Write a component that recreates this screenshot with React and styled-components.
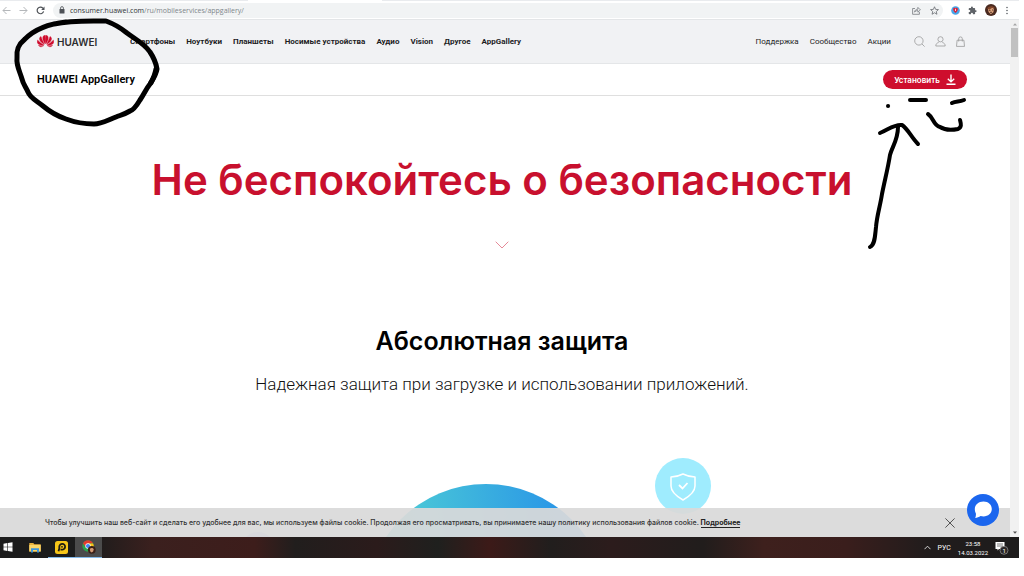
import React from 'react';
import styled, { createGlobalStyle } from 'styled-components';

const mainLinks = [
  'Смартфоны',
  'Ноутбуки',
  'Планшеты',
  'Носимые устройства',
  'Аудио',
  'Vision',
  'Другое',
  'AppGallery',
];

const sideLinks = ['Поддержка', 'Сообщество', 'Акции'];

const App = () => {
  return (
    <Desktop>
      <GlobalStyle />
      <TabStrip>
        <ActiveTab />
      </TabStrip>
      <BrowserBar />
      <Viewport>
        <Page>
          <SiteHeader />
          <SubHeader>
            <ProductName>HUAWEI AppGallery</ProductName>
            <InstallButton type="button">
              Установить
              <DownloadIcon />
            </InstallButton>
          </SubHeader>
          <Hero>
            <HeroTitle>Не беспокойтесь о безопасности</HeroTitle>
            <svg width="14" height="8" viewBox="0 0 14 8" fill="none" stroke="#e58a98">
              <path d="M.7.7 7 7l6.300-6.300" />
            </svg>
            <SectionTitle>Абсолютная защита</SectionTitle>
            <SectionText>Надежная защита при загрузке и использовании приложений.</SectionText>
            <Illustration />
          </Hero>
          <CookieBar>
            <CookieText>
              Чтобы улучшить наш веб-сайт и сделать его удобнее для вас, мы используем файлы cookie. Продолжая его
              просматривать, вы принимаете нашу политику использования файлов cookie.{' '}
              <MoreLink href="#cookies">Подробнее</MoreLink>
            </CookieText>
            <IconButton type="button" aria-label="Закрыть">
              <svg width="10" height="10" viewBox="0 0 10 10" stroke="#444" strokeWidth="0.9">
                <path d="M.4.4l9.200 9.200M9.600.4.4 9.600" />
              </svg>
            </IconButton>
          </CookieBar>
          <ChatButton type="button" aria-label="Чат">
            <svg width="20" height="20" viewBox="0 0 20 20" fill="#fff">
              <path d="M10.500 1.500c5 0 8.300 3.300 8.300 7.600 0 4.400-3.600 7.400-8.300 7.400-1 0-2-.1-2.900-.4-1.600 1.100-3.600 1.900-5.400 1.900.7-1.300.8-3 .7-4.500C2.300 12.300 1.800 10.800 1.800 9.100c0-4.300 3.700-7.600 8.700-7.600z" />
            </svg>
          </ChatButton>
        </Page>
        <ScrollBar>
          <svg width="8" height="8" viewBox="0 0 8 8" fill="#a3a3a3">
            <path d="M2 5.500 4 3.300l2 2.200z" />
          </svg>
          <Thumb />
          <svg width="8" height="8" viewBox="0 0 8 8" fill="#505050">
            <path d="M2 2.500 4 4.700l2-2.200z" />
          </svg>
        </ScrollBar>
      </Viewport>
      <Taskbar />
      <CircleMark width="164" height="120" viewBox="0 0 164 120">
        <path d="M54 15C72 11 90 12 106 12C114 15 121 19 127 24C135 30 145 35 150 43C154 49 156 54 157 60C156 66 153 70 150 75C146 80 144 85 140 91C137 96 134 101 130 102C125 105 121 106 116 108C108 111 101 115 94 115C84 115 74 113 66 110C57 107 49 102 43 97C37 92 30 89 28 83C26 78 23 75 22 70C20 63 16 56 17 49C16 40 19 35 25 30C34 21 47 15 66 13" />
        <path d="M156 60C155 66 153 70 151 74" />
      </CircleMark>
      <ArrowMark width="110" height="156" viewBox="0 0 110 156">
        <path d="M30 12h.1" />
        <path d="M52 6H68M94 9C98 7 101 8 106 6" />
        <path d="M70 20C76 24 75 31 82 33C88 37 95 36 100 35C104 33 103 30 102 26" />
        <path d="M12 153C17 151 17 142 18 133C19 121 22 113 24 100C27 85 30 74 32 61C34 53 40 46 40 33" />
        <path d="M22 39C30 36 36 30 44 31C50 35 53 43 60 50" />
      </ArrowMark>
    </Desktop>
  );
};

export default App;

const BrowserBar = () => (
  <Toolbar>
    <IconButton type="button" aria-label="Назад">
      <svg width="9" height="9" viewBox="0 0 9 9" fill="none" stroke="#b4b7ba">
        <path d="M8.500 4.500H1M4.500 1 1 4.500 4.500 8" />
      </svg>
    </IconButton>
    <IconButton type="button" aria-label="Вперёд">
      <svg width="9" height="9" viewBox="0 0 9 9" fill="none" stroke="#b4b7ba">
        <path d="M.5 4.500H8M4.500 1 8 4.500 4.500 8" />
      </svg>
    </IconButton>
    <IconButton type="button" aria-label="Обновить">
      <svg width="9" height="9" viewBox="0 0 9 9" fill="none" stroke="#4d5156" strokeWidth="1.2">
        <path d="M7.600 5.400A3.300 3.300 0 1 1 6.900 2.200L7.700 3" />
        <path d="M8.500.6v3.300H5.200z" fill="#4d5156" stroke="none" />
      </svg>
    </IconButton>
    <AddressBox>
      <svg width="6" height="8" viewBox="0 0 6 8">
        <rect x="0.500" y="3" width="5" height="4.500" rx="0.500" fill="#4d5156" />
        <path d="M1.600 3V2a1.400 1.400 0 0 1 2.800 0v1" fill="none" stroke="#4d5156" strokeWidth="0.800" />
      </svg>
      <Url>
        <b>consumer.huawei.com</b>/ru/mobileservices/appgallery/
      </Url>
      <svg width="9" height="9" viewBox="0 0 9 9" fill="none" stroke="#777b80" strokeWidth="0.800">
        <path d="M3 2.500H.6v5.800h6.800V6M2.500 6.200c.2-2 1.600-3 3.400-3V1.400l2.500 2.500-2.500 2.300V4.600C4.500 4.500 3.300 5 2.500 6.200z" />
      </svg>
      <svg width="9" height="9" viewBox="0 0 24 24" fill="none" stroke="#5f6368" strokeWidth="2">
        <path d="m12 2 3 7 7.500.6-5.700 5 1.700 7.400L12 18l-6.500 4 1.700-7.400-5.700-5L9 9z" />
      </svg>
    </AddressBox>
    <svg width="9" height="9" viewBox="0 0 9 9">
      <circle cx="4.500" cy="4.500" r="4.300" fill="#48a5e8" />
      <path d="M4.500 2c1.500-.6 2.600.2 2.300 1.500C6.600 5 5.500 6.300 4.500 7 3.500 6.300 2.400 5 2.200 3.500 1.900 2.200 3 1.400 4.500 2z" fill="#dd2238" />
      <path d="M4.500 2.800v2.200" stroke="#fff" strokeWidth="0.800" />
    </svg>
    <svg width="9" height="9" viewBox="0 0 24 24" fill="#5f6368">
      <path d="M20.500 11H19V7a2 2 0 0 0-2-2h-4V3.500a2.500 2.500 0 0 0-5 0V5H4a2 2 0 0 0-2 2v3.800h1.500a2.700 2.700 0 0 1 0 5.400H2V20a2 2 0 0 0 2 2h3.800v-1.500a2.700 2.700 0 0 1 5.400 0V22H17a2 2 0 0 0 2-2v-4h1.500a2.500 2.500 0 0 0 0-5z" />
    </svg>
    <svg width="12" height="12" viewBox="0 0 12 12">
      <circle cx="6" cy="6" r="6" fill="#4a2a20" />
      <path d="M3 5.200c1-2 4-2.500 6-.2l-.6 3.300-2.600 1.900L3.600 8z" fill="#dba17a" />
      <path d="M2 4.500C4 1.800 8 1.500 10 4.300L7 4 4.500 5.500z" fill="#80442a" />
      <path d="M4 6.300h1.500M7 6h1.300M5 8.300h2" stroke="#3b211b" strokeWidth="0.800" />
    </svg>
    <svg width="4" height="9" viewBox="0 0 4 9" fill="#5f6368">
      <circle cx="2" cy="1.500" r="0.800" />
      <circle cx="2" cy="4.500" r="0.800" />
      <circle cx="2" cy="7.500" r="0.800" />
    </svg>
  </Toolbar>
);

const SiteHeader = () => (
  <Header>
    <Logo href="#home">
      <svg width="17" height="13" viewBox="0 0 34 26" fill="#cf0a2c" stroke="#cf0a2c" strokeWidth="0.800">
        <path d="M16.300 17.500C13 13 10 6 12.500 2.300 13.700.7 15.800.3 16.300.3c.9 5 .9 12 0 17.200z" />
        <path d="M17.700 17.500C21 13 24 6 21.500 2.300 20.300.7 18.200.3 17.700.3c-.9 5-.9 12 0 17.200z" />
        <path d="M14.700 18.700C8.500 15.500 4.200 10.500 5 6.500c.3-1.700 1.700-3 3-3.500 1.500 5.200 4.400 11 6.700 15.700z" />
        <path d="M19.300 18.700c6.200-3.200 10.500-8.200 9.700-12.200-.3-1.700-1.700-3-3-3.500-1.500 5.200-4.400 11-6.700 15.700z" />
        <path d="M13.700 20C8 20.500 2.800 19.500 1 16c-1-2-.5-4.500.3-6 3.300 4 8 7.500 12.400 10z" />
        <path d="M20.300 20c5.700.5 10.900-.5 12.700-4 1-2 .5-4.500-.3-6-3.300 4-8 7.500-12.400 10z" />
        <path d="M13.400 21.200c-3 2.400-7 3.600-9.600.5-.5-.6-.8-1-.9-1.400 3.500 1 7 1.200 10.500.9z" />
        <path d="M20.600 21.200c3 2.400 7 3.600 9.600.5.5-.6.800-1 .9-1.400-3.500 1-7 1.200-10.500.9z" />
      </svg>
      HUAWEI
    </Logo>
    <Nav>
      {mainLinks.map((link) => (
        <NavLink key={link} href="#catalog" $bold>
          {link}
        </NavLink>
      ))}
    </Nav>
    <SideNav>
      {sideLinks.map((link) => (
        <NavLink key={link} href="#info">
          {link}
        </NavLink>
      ))}
    </SideNav>
    <HeaderIcons>
      <IconButton type="button" aria-label="Поиск">
        <svg width="11" height="11" viewBox="0 0 11 11" fill="none" stroke="#999" strokeWidth="0.800">
          <circle cx="4.900" cy="4.900" r="4.200" />
          <path d="m8 8 2.600 2.600" />
        </svg>
      </IconButton>
      <IconButton type="button" aria-label="Профиль">
        <svg width="11" height="11" viewBox="0 0 11 11" fill="none" stroke="#999" strokeWidth="0.800">
          <circle cx="5.500" cy="3.300" r="2.600" />
          <path d="M3.700 6.500C2 6.800.8 8 .8 10h9.400c0-2-1.200-3.200-2.900-3.500" />
        </svg>
      </IconButton>
      <IconButton type="button" aria-label="Корзина">
        <svg width="9" height="11" viewBox="0 0 9 11" fill="none" stroke="#999" strokeWidth="0.800">
          <path d="M1.100 4.200h6.800l.6 6.200h-8zM2.700 5.500V2.700a1.800 1.800 0 0 1 3.600 0v2.800" />
        </svg>
      </IconButton>
    </HeaderIcons>
  </Header>
);

const DownloadIcon = () => (
  <svg width="10" height="11" viewBox="0 0 10 11" fill="none" stroke="#fff" strokeWidth="1.400">
    <path d="M5 .5v7.300M1.800 4.800 5 7.900l3.200-3.100M.5 10.200h9" />
  </svg>
);

const Illustration = () => (
  <Drawing width="560" height="120" viewBox="0 0 560 120">
    <defs>
      <linearGradient id="globe" x1="0" y1="0.300" x2="1" y2="0.200">
        <stop offset="0.150" stopColor="#4ccbd6" />
        <stop offset="0.800" stopColor="#2b98e6" />
      </linearGradient>
    </defs>
    <circle cx="264" cy="155" r="121" fill="url(#globe)" />
    <circle cx="36" cy="99" r="17" fill="#c4c2f4" />
    <circle cx="461" cy="36" r="28" fill="#9fecfe" />
    <path
      d="M461 24c4 2 8 3 12 3v9c0 6-5 10-12 14-7-4-12-8-12-14v-9c4 0 8-1 12-3z"
      fill="none"
      stroke="#fff"
      strokeWidth="1.500"
      strokeLinejoin="round"
    />
    <path d="m457 35 3.500 3.500 5-5.500" fill="none" stroke="#fff" strokeWidth="1.800" />
  </Drawing>
);

const Taskbar = () => (
  <Bar>
    <Task type="button" aria-label="Пуск">
      <svg width="10" height="10" viewBox="0 0 10 10" fill="#fff">
        <path d="M.5 1.700 4.400 1v3.700H.5zM5 .9 9.500.2v4.500H5zM.5 5.300h3.900V9L.5 8.300zM5 5.300h4.500v4.500L5 9.100z" />
      </svg>
    </Task>
    <Task type="button" aria-label="Проводник">
      <svg width="12" height="11" viewBox="0 0 12 11">
        <path d="M.3 1h4l1 1.200h6.400V9.500H.3z" fill="#e9b23c" />
        <path d="M.3 3h11.400v6.500H.3z" fill="#fcd668" />
        <path d="M2 10.500V6.200h8v4.300H8V8H4v2.500z" fill="#3f97dc" />
      </svg>
    </Task>
    <Task type="button" aria-label="Плеер" $running>
      <svg width="13" height="13" viewBox="0 0 13 13">
        <rect width="13" height="13" rx="2.500" fill="#f7c619" />
        <path d="M3.500 10.300 4.300 7.500V5.600A2.900 2.900 0 1 1 7 8.600H5.500" fill="none" stroke="#201d12" strokeWidth="1.800" />
        <circle cx="7" cy="5.800" r="0.900" fill="#201d12" />
      </svg>
    </Task>
    <Task type="button" aria-label="Chrome" $running $active>
      <svg width="14" height="14" viewBox="0 0 14 14">
        <circle cx="6" cy="6" r="5.700" fill="#2ba24c" />
        <path d="M1 3.200A5.700 5.700 0 0 1 11 3.200L6 3.400 3.700 7.300z" fill="#e33b2e" />
        <path d="M6 3.400h5.100A5.700 5.700 0 0 1 6 11.700l2.300-4.300z" fill="#fbc116" />
        <circle cx="6" cy="6" r="2.700" fill="#fff" />
        <circle cx="6" cy="6" r="2.100" fill="#4285f4" />
        <circle cx="9.800" cy="9.800" r="3.900" fill="#3a2018" />
        <path d="M7.800 9c1-1.300 3.200-1.200 4 .3l-.7 2.200-1.400.9-1.400-1z" fill="#d39a75" />
      </svg>
    </Task>
    <Tray>
      <svg width="7" height="5" viewBox="0 0 7 5" fill="none" stroke="#e6e6e6" strokeWidth="0.900">
        <path d="m.5 4.200 3-3 3 3" />
      </svg>
      <span>РУС</span>
      <Clock>
        <span>23:58</span>
        <span>14.03.2022</span>
      </Clock>
      <svg width="14" height="14" viewBox="0 0 14 14">
        <path d="M.5 1h9v7H4L2.500 9.600V8h-2z" fill="#fff" />
        <path d="M2 3h6M2 5h6" stroke="#444" strokeWidth="0.700" />
        <circle cx="9" cy="9.300" r="4" fill="#2a2626" stroke="#999" strokeWidth="0.700" />
        <text x="7.500" y="11.500" fontSize="6" fill="#fff">
          1
        </text>
      </svg>
    </Tray>
  </Bar>
);

const GlobalStyle = createGlobalStyle`
  * {
    box-sizing: border-box;
  }

  body {
    margin: 0;
    background: #fff;
    font-family: Inter, 'Liberation Sans', sans-serif;
    color: #000;
  }

  svg {
    display: block;
    flex-shrink: 0;
  }
`;

const Desktop = styled.div`
  display: flex;
  flex-direction: column;
  position: relative;
  height: 100vh;
  padding: 0 5px 18px 0;
  overflow: hidden;
`;

const TabStrip = styled.div`
  flex: none;
  height: 1px;
  padding-left: 248px;
  background: #e9ebee;
`;

const ActiveTab = styled.div`
  width: 134px;
  height: 1px;
  background: #fff;
`;

const Toolbar = styled.div`
  display: flex;
  flex: none;
  align-items: center;
  gap: 8px;
  height: 19px;
  padding: 0 10px 0 2px;
  border-bottom: 1px solid #e3e5e7;
`;

const IconButton = styled.button`
  display: block;
  padding: 0;
  border: none;
  background: none;
  cursor: pointer;
`;

const AddressBox = styled.div`
  display: flex;
  flex: 1;
  align-items: center;
  gap: 9px;
  height: 15px;
  padding: 0 4px 0 6px;
  border-radius: 8px;
  background: #f1f3f4;
`;

const Url = styled.span`
  flex: 1;
  margin-left: -4px;
  font-family: 'Open Sans', sans-serif;
  font-size: 7px;
  color: #80868b;

  b {
    font-weight: 400;
    color: #303336;
  }
`;

const Viewport = styled.div`
  display: flex;
  flex: 1;
  min-height: 0;
`;

const Page = styled.main`
  position: relative;
  flex: 1;
  min-width: 0;
  overflow: hidden;
`;

const Header = styled.header`
  display: flex;
  align-items: center;
  height: 44px;
  padding: 0 45px 0 37px;
  border-bottom: 1px solid #e4e6e8;
  background: #f1f2f4;
`;

const Logo = styled.a`
  display: flex;
  align-items: center;
  gap: 3px;
  width: 93px;
  font-size: 10px;
  font-weight: 600;
  color: #2c2c2e;
  text-decoration: none;
`;

const Nav = styled.nav`
  display: flex;
  flex: 1;
  gap: 11px;
`;

const SideNav = styled.nav`
  display: flex;
  gap: 11px;
`;

const NavLink = styled.a`
  font-family: Roboto, 'Liberation Sans', sans-serif;
  font-size: 8px;
  font-weight: ${({ $bold }) => ($bold ? 700 : 400)};
  line-height: 10px;
  color: #1d1d1f;
  text-decoration: none;
  white-space: nowrap;
`;

const HeaderIcons = styled.div`
  display: flex;
  gap: 10px;
  margin-left: 23px;
`;

const SubHeader = styled.div`
  display: flex;
  align-items: center;
  justify-content: space-between;
  height: 32px;
  padding: 0 43px 0 37px;
  border-bottom: 1px solid #dfdfdf;
`;

const ProductName = styled.strong`
  font-family: Roboto, 'Liberation Sans', sans-serif;
  font-size: 11px;
  font-weight: 600;
`;

const InstallButton = styled.button`
  display: flex;
  align-items: center;
  justify-content: center;
  gap: 6px;
  width: 84px;
  height: 19px;
  padding: 0;
  border: none;
  border-radius: 10px;
  background: #ce0e2d;
  font-family: inherit;
  font-size: 8px;
  font-weight: 600;
  color: #fff;
  cursor: pointer;
`;

const Hero = styled.section`
  display: flex;
  flex-direction: column;
  align-items: center;
  padding: 55px 6px 0 0;
  white-space: nowrap;
`;

const HeroTitle = styled.h1`
  margin: 0 0 32px;
  font-size: 42px;
  font-weight: 600;
  line-height: 58px;
  color: #c8102e;
`;

const SectionTitle = styled.h2`
  margin: 75px 0 14px;
  font-size: 25px;
  font-weight: 600;
  line-height: 34px;
`;

const SectionText = styled.p`
  margin: 0;
  font-family: Roboto, 'Liberation Sans', sans-serif;
  font-size: 17px;
  font-weight: 300;
  line-height: 24px;
  color: #111;
`;

const Drawing = styled.svg`
  margin-top: 54px;
`;

const CookieBar = styled.aside`
  display: flex;
  position: absolute;
  right: 0;
  bottom: 0;
  left: 0;
  align-items: center;
  justify-content: space-between;
  height: 29px;
  padding: 0 55px 0 45px;
  background: rgba(217, 217, 217, 0.93);
`;

const CookieText = styled.p`
  margin: 0;
  font-size: 7px;
  font-weight: 500;
  line-height: 10px;
  color: #333;
  white-space: nowrap;
`;

const MoreLink = styled.a`
  border-bottom: 1px solid #222;
  font-weight: 700;
  color: #222;
  text-decoration: none;
`;

const ChatButton = styled.button`
  display: flex;
  position: absolute;
  right: 11px;
  bottom: 11px;
  align-items: center;
  justify-content: center;
  width: 32px;
  height: 32px;
  padding: 0;
  border: none;
  border-radius: 50%;
  background: #1b66ee;
  cursor: pointer;
`;

const ScrollBar = styled.div`
  display: flex;
  flex-direction: column;
  align-items: center;
  width: 9px;
  background: #f1f1f1;
`;

const Thumb = styled.div`
  width: 7px;
  height: 29px;
  margin-bottom: auto;
  background: #c1c1c1;
`;

const Bar = styled.footer`
  display: flex;
  flex: none;
  height: 21px;
  background: linear-gradient(
    90deg,
    #1c1c1c 9%,
    #3b201e 15%,
    #3d1d1b 25%,
    #211e1d 29%,
    #2b1b1b 37%,
    #1f201e 43%,
    #3c1a18 48%,
    #211e1d 54%,
    #2c1c1c 60%,
    #211d1c 69%,
    #3e201d 75%,
    #3a1e1c 83%,
    #211c1c 91%,
    #1d1c1c
  );
`;

const Task = styled.button`
  display: flex;
  align-items: center;
  justify-content: center;
  width: 27px;
  padding: 0;
  border: none;
  border-bottom: 1px solid ${({ $running }) => ($running ? '#83b9ea' : 'transparent')};
  background: ${({ $active }) => ($active ? '#4b4b4b' : 'none')};

  &:first-child {
    width: 21px;
    padding-right: 6px;
  }
`;

const Tray = styled.div`
  display: flex;
  align-items: center;
  gap: 7px;
  margin-left: auto;
  padding-right: 10px;
  font-family: Roboto, 'Liberation Sans', sans-serif;
  font-size: 7px;
  color: #fff;
`;

const Clock = styled.div`
  display: flex;
  flex-direction: column;
  align-items: center;
  font-size: 6px;
  line-height: 9px;
`;

const Mark = styled.svg`
  position: absolute;
  fill: none;
  stroke: #000;
  stroke-width: 4px;
  stroke-linecap: round;
  stroke-linejoin: round;
  pointer-events: none;
`;

const CircleMark = styled(Mark)`
  top: 9px;
  left: 0;
  stroke-width: 5px;
`;

const ArrowMark = styled(Mark)`
  top: 94px;
  right: 56px;
`;
